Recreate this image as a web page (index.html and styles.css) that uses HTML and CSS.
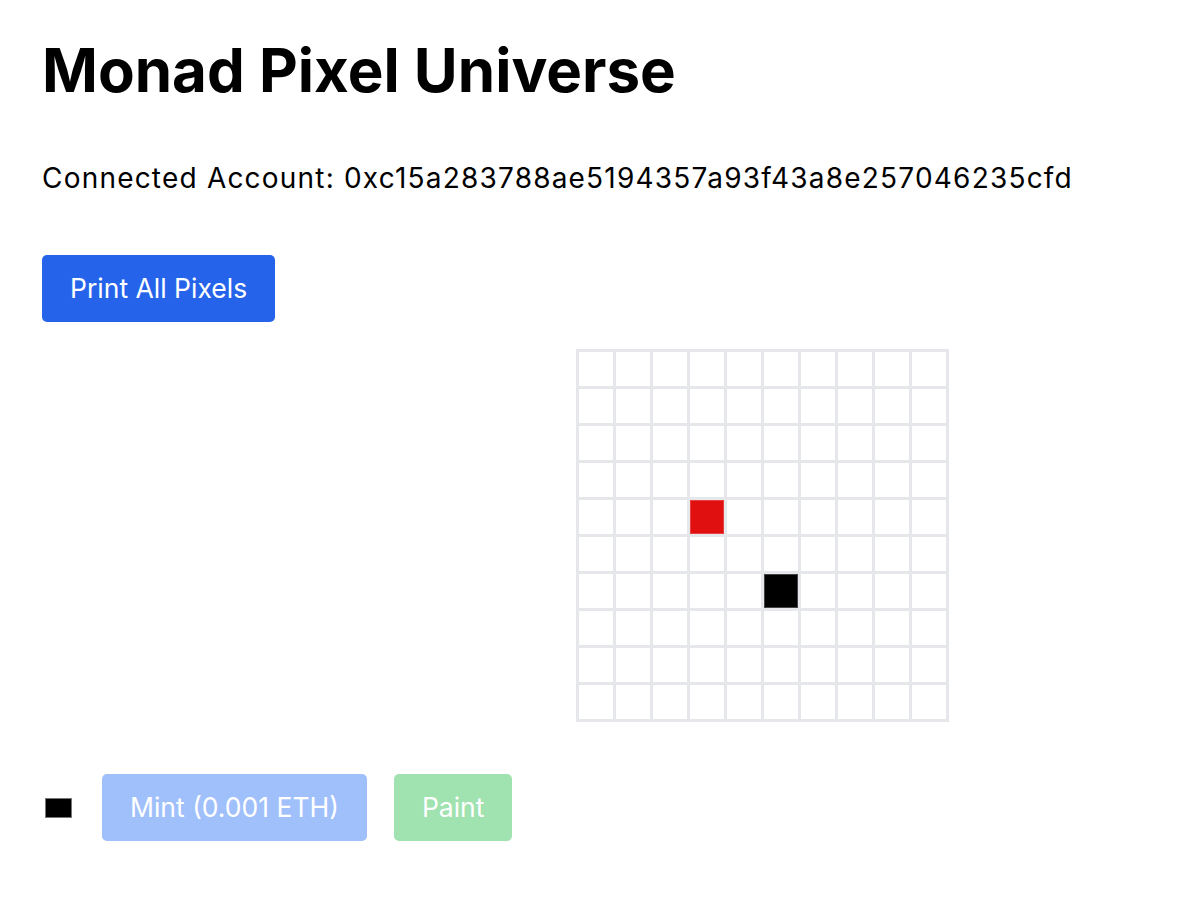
FILE: index.html
```html
<!DOCTYPE html>
<html lang="en">
  <head>
    <meta charset="UTF-8" />
    <meta name="viewport" content="width=device-width, initial-scale=1.0" />
    <title>Monad Pixel Universe</title>
    <link rel="stylesheet" href="styles.css">
  </head>
  <body>
    <div class="container">
      <h1>Monad Pixel Universe</h1>
      <p class="account">Connected Account: 0xc15a283788ae5194357a93f43a8e257046235cfd</p>
      <button class="btn btn-print" id="print-btn">Print All Pixels</button>
      <div class="board-wrap">
        <div class="board" id="board"></div>
      </div>
      <div class="controls">
        <div class="swatch"></div>
        <button class="btn btn-mint" disabled>Mint (0.001 ETH)</button>
        <button class="btn btn-paint" disabled>Paint</button>
      </div>
    </div>
    <script>
      const board = document.getElementById("board");
      const painted = { "3,4": "red", "5,6": "black" };

      for (let y = 0; y < 10; y++) {
        for (let x = 0; x < 10; x++) {
          const cell = document.createElement("div");
          cell.className = "cell";
          const color = painted[x + "," + y];
          if (color) cell.classList.add("cell-" + color);
          board.appendChild(cell);
        }
      }
    </script>
  </body>
</html>
```

FILE: styles.css
```css
body {
  font-family: "Inter", "Noto Sans", sans-serif;
  margin: 0;
  padding: 0;
  background-color: #fff;
  color: #000;
}
.container {
  padding: 32px 42px;
}
h1 {
  margin: 0;
  font-size: 60px;
  line-height: 76px;
  font-weight: 700;
}
.account {
  margin: 54px 0 0;
  font-size: 28px;
  line-height: 32px;
  letter-spacing: 1.2px;
}
.btn {
  font-family: inherit;
  font-size: 26.5px;
  line-height: 35px;
  color: #fff;
  border: none;
  border-radius: 5px;
  padding: 16px 28px;
  cursor: pointer;
}
.btn-print {
  margin-top: 61px;
  background-color: #2563eb;
}
.btn-mint {
  background-color: #a0c0fb;
  cursor: not-allowed;
}
.btn-paint {
  background-color: #a0e2b0;
  cursor: not-allowed;
}
.board-wrap {
  margin-top: 27px;
  padding-left: 534px;
}
.board {
  display: inline-grid;
  grid-template-columns: repeat(10, 34px);
  grid-auto-rows: 34px;
  gap: 3px;
  padding: 3px;
  background-color: #e5e7eb;
}
.cell {
  background-color: #fff;
}
.cell-red {
  background-color: #e01010;
  box-shadow: inset 0 0 0 1px #e84040;
}
.cell-black {
  background-color: #000;
  box-shadow: inset 0 0 0 1px #444;
}
.controls {
  display: flex;
  align-items: center;
  gap: 27px;
  margin-top: 52px;
}
.swatch {
  width: 25px;
  height: 18px;
  margin: 0 3px;
  background-color: #000;
  border: 1px solid #777;
}
```
